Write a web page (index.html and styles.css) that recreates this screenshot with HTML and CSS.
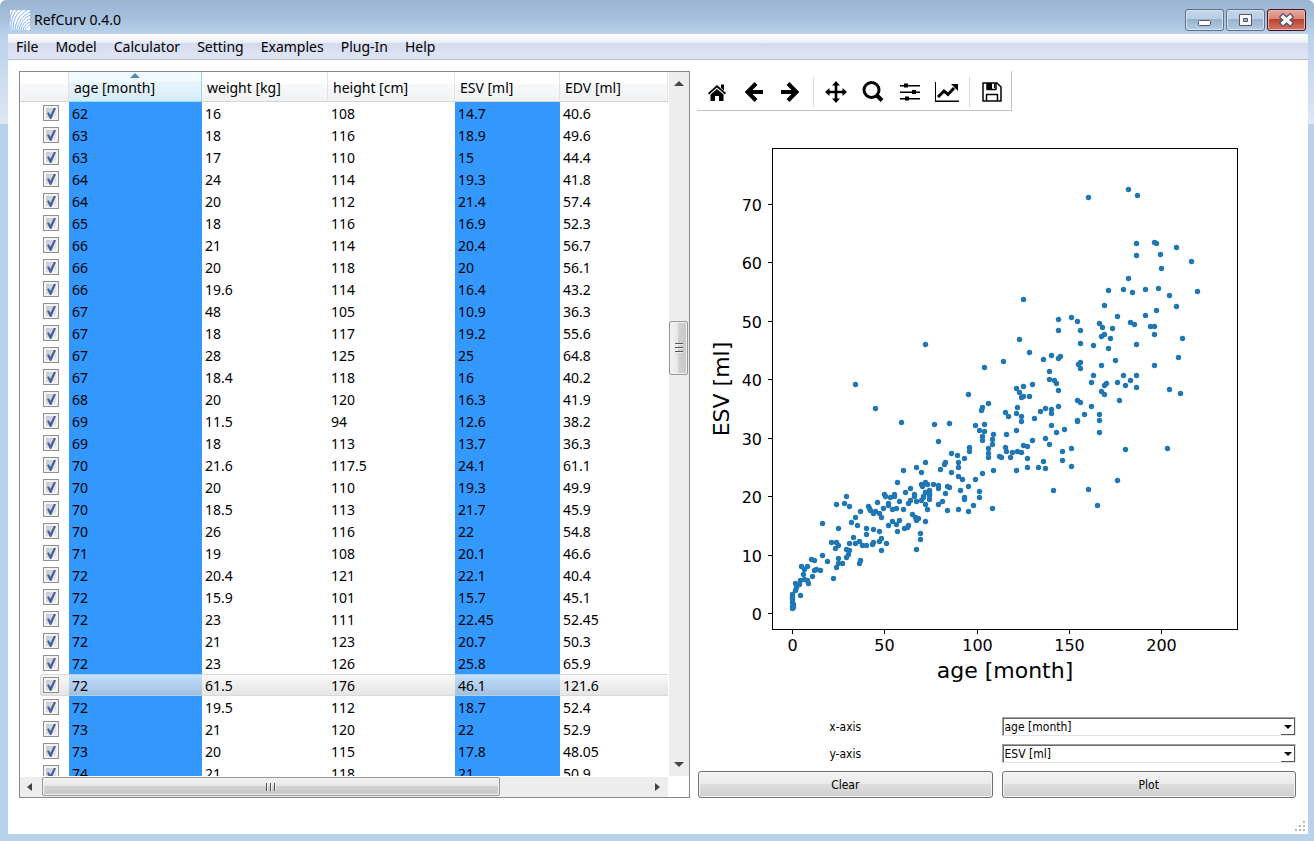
FILE: index.html
```html
<!DOCTYPE html>
<html lang="en">
<head>
<meta charset="utf-8">
<title>RefCurv 0.4.0</title>
<link rel="stylesheet" href="styles.css">
</head>
<body>
<div class="window">
  <header class="titlebar">
    <svg class="logo" viewBox="0 0 20 20" aria-hidden="true">
      <rect width="20" height="20" fill="#fff"/>
      <g fill="none" stroke="#7fb2f5" stroke-width="1">
        <path d="M1 20C1 12 2 6 7 0M3 20C3 12 5 5 12 0M5 20C6 12 9 5 17 0M7 20C8 13 12 6 20 2M9 20C10 14 14 8 20 5M11 20C12 15 15 11 20 9M13 20C14 16 16 14 20 12M15 20C16 18 18 16 20 15M0 12C0 6 1 4 3 0"/>
      </g>
    </svg>
    <span class="title">RefCurv 0.4.0</span>
    <div class="controls">
      <button class="ctl" aria-label="Minimize"><svg viewBox="0 0 36 20"><rect x="12.500" y="10.500" width="12" height="5" rx="1" fill="#fff" stroke="#535666"/></svg></button>
      <button class="ctl" aria-label="Restore"><svg viewBox="0 0 36 20"><path d="M12.500 4.500h12v11h-12zM16.500 8.500v3h4v-3z" fill="#f7f7f7" fill-rule="evenodd" stroke="#535666"/></svg></button>
      <button class="ctl close" aria-label="Close"><svg viewBox="0 0 36 20"><path d="M15 7L22 13M22 7L15 13" stroke="#535666" stroke-width="6" stroke-linecap="square"/><path d="M15 7L22 13M22 7L15 13" stroke="#f7f7f7" stroke-width="3.500" stroke-linecap="square"/></svg></button>
    </div>
  </header>
  <div class="client">
    <nav class="menubar">
      <button>File</button><button>Model</button><button>Calculator</button><button>Setting</button><button>Examples</button><button>Plug-In</button><button>Help</button>
    </nav>
    <main class="content">
      <section class="table-pane">
        <div class="viewport">
          <table>
            <colgroup><col class="c-check"><col class="c-age"><col class="c-weight"><col class="c-height"><col class="c-esv"><col></colgroup>
            <thead><tr><th></th><th class="sorted">age [month]</th><th>weight [kg]</th><th>height [cm]</th><th>ESV [ml]</th><th>EDV [ml]</th></tr></thead>
            <tbody id="rows"></tbody>
          </table>
        </div>
        <div class="scroll vertical">
          <svg class="arrow" viewBox="0 0 10 10"><path d="M0 8L5 3L10 8z"/></svg>
          <div class="track"><div class="thumb"><i></i><i></i><i></i></div></div>
          <svg class="arrow" viewBox="0 0 10 10"><path d="M0 2L5 7L10 2z"/></svg>
        </div>
        <div class="scroll horizontal">
          <svg class="arrow" viewBox="0 0 10 10"><path d="M8 1L3 5L8 9z"/></svg>
          <div class="track"><div class="thumb"><i></i><i></i><i></i></div></div>
          <svg class="arrow" viewBox="0 0 10 10"><path d="M3 1L8 5L3 9z"/></svg>
        </div>
      </section>
      <section class="plot-pane">
        <div class="toolbar">
          <button aria-label="Home"><svg viewBox="0 0 24 24"><path d="M12 5L21 13L20 14.500L12 7.500L4 14.500L3 13zM16 4.500h3v6l-3-2.700zM12 9L18.500 14.500V21H14v-5h-4v5H5.500v-6.500z"/></svg></button>
          <button aria-label="Back"><svg viewBox="0 0 24 24"><path class="line" d="M21 12H6M14 3.500L5.500 12L14 20.500"/></svg></button>
          <button aria-label="Forward"><svg viewBox="0 0 24 24"><path class="line" d="M2 12H17M9 3.500L17.500 12L9 20.500"/></svg></button>
          <span class="sep"></span>
          <button aria-label="Pan"><svg viewBox="0 0 24 24"><path d="M12 1L16 5.500H13.300V10.700H18.500V8L23 12L18.500 16V13.300H13.300V18.500H16L12 23L8 18.500H10.700V13.300H5.500V16L1 12L5.500 8V10.700H10.700V5.500H8z"/></svg></button>
          <button aria-label="Zoom"><svg viewBox="0 0 24 24"><circle cx="10.500" cy="10" r="7.500" fill="none" stroke="#000" stroke-width="3"/><path class="line" d="M16 15.500L21 20.500"/></svg></button>
          <button aria-label="Configure subplots"><svg viewBox="0 0 24 24"><path d="M2 5h20v1.500H2zM2 11.500h20V13H2zM2 18h20v1.500H2zM6 3.500h4v4H6zM14 10h4v4h-4zM7 16.500h4v4H7z"/></svg></button>
          <button aria-label="Edit axis"><svg class="wide" viewBox="0 0 26 24"><path d="M1 2h1v18.500h23V22H1z"/><path d="M4 17L10 11L14 14.500L20 8" fill="none" stroke="#000" stroke-width="3"/><path d="M17 4h7v7z"/></svg></button>
          <span class="sep"></span>
          <button aria-label="Save"><svg viewBox="0 0 24 24"><path d="M3 3h14l4 4v14H3zM6.500 21v-6.500h11V21M7 3v6.500h9V3" fill="none" stroke="#000" stroke-width="1.500" stroke-linejoin="round"/><path d="M7 3h5v6H7zM14 4h1v4h-1z"/></svg></button>
        </div>
        <svg class="chart" id="chart" viewBox="697 111 599 596" preserveAspectRatio="xMidYMin meet" role="img" aria-label="Scatter plot of ESV against age">
          <g id="points" fill="#1f77b4"></g>
          <rect x="772.500" y="148.500" width="465" height="481" fill="none" stroke="#000"/>
          <g id="ticks" stroke="#000"></g>
          <g id="labels" class="ticktext"></g>
          <text class="axis" x="1005" y="678" text-anchor="middle">age [month]</text>
          <text class="axis" transform="translate(729 389) rotate(-90)" text-anchor="middle">ESV [ml]</text>
        </svg>
        <form class="form">
          <label for="xaxis">x-axis</label>
          <div class="combo"><select id="xaxis"><option>age [month]</option><option>weight [kg]</option><option>height [cm]</option><option>ESV [ml]</option><option>EDV [ml]</option></select><span></span></div>
          <label for="yaxis">y-axis</label>
          <div class="combo"><select id="yaxis"><option>ESV [ml]</option><option>EDV [ml]</option><option>age [month]</option><option>weight [kg]</option><option>height [cm]</option></select><span></span></div>
          <button type="button" class="push">Clear</button>
          <button type="button" class="push">Plot</button>
        </form>
      </section>
    </main>
    <svg class="grip" viewBox="0 0 12 12" aria-hidden="true"><path d="M8 0h2v2h-2zM4 4h2v2h-2zM8 4h2v2h-2zM0 8h2v2h-2zM4 8h2v2h-2zM8 8h2v2h-2z"/></svg>
  </div>
</div>
<script src="app.js"></script>
</body>
</html>
```
FILE: styles.css
```css
* { box-sizing: border-box; }

body {
  margin: 0;
  font: 14px/20px "Noto Sans", "Open Sans", sans-serif;
  color: #000;
}

button, select { font: inherit; color: inherit; }

.window {
  height: 100vh;
  min-height: 640px;
  display: flex;
  flex-direction: column;
  padding: 0 6px 7px 8px;
  border-radius: 6px 6px 0 0;
  background:
    linear-gradient(#99b4d1, #a6c0dc 18px, #b9d1ea 34px) top / 100% 34px no-repeat,
    linear-gradient(#b9d1ea, #dce8f5) 0 34px / 100% 90px no-repeat,
    #b9d1ea;
}

.titlebar {
  height: 34px;
  flex: none;
  display: flex;
  align-items: flex-start;
  padding: 9px 2px 0;
}

.logo { width: 20px; height: 20px; margin-top: 1px; }
.title { margin: 1px auto 0 4px; }

.controls { display: flex; gap: 2px; }

.ctl {
  width: 39px;
  height: 22px;
  padding: 0;
  border: 1px solid #5f7088;
  border-radius: 3px;
  background: linear-gradient(#c3d6e9, #b9cfe5 45%, #98b1cc 46%, #b4cce4);
  box-shadow: inset 0 0 0 1px #d6e4f2;
}

.ctl svg { display: block; width: 36px; height: 20px; }

.ctl.close {
  border-color: #431422;
  background: linear-gradient(#e8a89c, #d9877a 45%, #b8412b 46%, #d4786a);
  box-shadow: inset 0 0 0 1px #e9b5ac;
}

.client {
  flex: 1;
  min-height: 0;
  display: flex;
  flex-direction: column;
  position: relative;
  background: #fff;
}

.menubar {
  height: 26px;
  flex: none;
  display: flex;
  gap: 17px;
  padding: 0 8px;
  border-bottom: 1px solid #b6bccc;
  background: linear-gradient(#fff, #e8edf6 9px, #d4daed 9px, #e1e6f6);
}

.menubar button { padding: 0; border: 0; background: none; }

.content {
  flex: 1;
  min-height: 0;
  display: grid;
  grid-template-columns: minmax(0, 671fr) minmax(0, 599fr);
  gap: 7px;
  padding: 11px 12px 36px 11px;
}

.table-pane {
  min-height: 0;
  display: grid;
  grid-template: minmax(0, 1fr) 20px / minmax(0, 1fr) 20px;
  gap: 1px;
  border: 1px solid #828790;
}

.viewport { overflow: hidden; }

table {
  width: 100%;
  table-layout: fixed;
  border-collapse: separate;
  border-spacing: 0;
}

.c-check { width: 49px; }
.c-age { width: 133px; }
.c-weight { width: 126px; }
.c-height { width: 127px; }
.c-esv { width: 105px; }

th {
  height: 30px;
  padding: 2px 0 0 5px;
  text-align: left;
  font-weight: 400;
  white-space: nowrap;
  border-right: 1px solid #e2e3e6;
  border-bottom: 1px solid #d5d5d5;
  background: linear-gradient(#fff 12px, #f7f8fa 12px, #f1f2f4);
}

th.sorted {
  position: relative;
  border-right-color: #96d9f0;
  border-bottom-color: #96d9f0;
  background: linear-gradient(#f2fafd 10px, #e4f4fb 10px, #d8ecf6);
}

th.sorted::after {
  content: "";
  position: absolute;
  top: 1px;
  left: calc(50% - 5px);
  border: 5px solid transparent;
  border-top: 0;
  border-bottom-color: #4d8cab;
}

td { height: 22px; padding: 2px 0 0 3px; line-height: 20px; }

td.marked { background: #39f; }

td.check { padding: 0 0 0 20px; }

td.check label {
  display: flex;
  align-items: center;
  height: 22px;
  padding-left: 3px;
}

.check input {
  appearance: none;
  position: relative;
  width: 16px;
  height: 16px;
  margin: 0;
  border: 1px solid #8e8f8f;
  background: linear-gradient(135deg, #b9bec9, #f4f5f7);
  box-shadow: inset 0 0 0 2px #f4f4f4;
}

.check input:checked::after {
  content: "";
  position: absolute;
  inset: 2px 2px 1px 3px;
  background: #4a5f97;
  clip-path: polygon(0 45%, 20% 38%, 38% 62%, 76% 0, 100% 0, 48% 100%, 32% 100%);
}

tr.current td { padding-top: 1px; border: solid #d9d9d9; border-width: 1px 0; background: linear-gradient(#f8f8f8, #e5e5e5); }
tr.current td.marked { border-color: #b5cfe7; background: linear-gradient(#c2dffb, #a0c0e0); }
tr.current td.check { padding-top: 0; border: 0; background: none; }
tr.current label { border: 1px solid #d9d9d9; border-right: 0; border-radius: 3px 0 0 3px; background: linear-gradient(#f8f8f8, #e5e5e5); padding-left: 2px; }

tr.current td:not(.check) { line-height: 19px; }

.scroll { display: flex; align-items: center; background: #ededed; }
.vertical { flex-direction: column; padding: 6px 0; }
.horizontal { padding: 0 6px 0 4px; }
.arrow { width: 10px; height: 10px; flex: none; fill: #444; }
.track { flex: 1; align-self: stretch; display: flex; }
.vertical .track { flex-direction: column; padding: 233px 1px 0 0; }
.horizontal .track { padding: 0 0 1px 8px; }

.thumb {
  display: flex;
  align-items: center;
  justify-content: center;
  gap: 2px;
  border: 1px solid #979797;
  border-radius: 2px;
  background: linear-gradient(#f4f4f4, #e6e6e6 48%, #d2d2d4 49%, #c6c6c8);
  box-shadow: inset 0 0 0 1px #f2f2f2;
}

.horizontal .thumb { width: 75%; }
.vertical .thumb { height: 54px; flex-direction: column; background: linear-gradient(90deg, #f4f4f4, #e6e6e6 48%, #d2d2d4 49%, #c6c6c8); }
.thumb i { width: 2px; height: 8px; border-left: 1px solid #555; border-right: 1px solid #eee; }
.vertical .thumb i { width: 8px; height: 2px; border: 0; border-top: 1px solid #555; border-bottom: 1px solid #eee; }

.plot-pane { min-height: 0; display: flex; flex-direction: column; }

.toolbar {
  flex: none;
  align-self: flex-start;
  display: flex;
  align-items: center;
  height: 40px;
  padding: 2px 1px 0 1px;
  border: solid #c3c3c3;
  border-width: 0 1px 1px 0;
}

.toolbar button {
  display: flex;
  align-items: center;
  justify-content: center;
  width: 37px;
  height: 36px;
  padding: 0;
  border: 0;
  background: none;
}

.toolbar svg { width: 24px; height: 24px; }
.toolbar svg.wide { width: 26px; }
.line { fill: none; stroke: #000; stroke-width: 4; }
.sep { width: 1px; height: 30px; margin: 0 3px 0 4px; background: #dcdcdc; }

.chart { flex: 1; min-height: 0; width: 100%; }
.ticktext { font: 16px "DejaVu Sans", sans-serif; }
.axis { font: 22px "DejaVu Sans", sans-serif; }

.form {
  flex: none;
  display: grid;
  grid-template-columns: 1fr 1fr;
  gap: 8px 9px;
  padding-left: 1px;
  font: 12px/16px "DejaVu Sans Condensed", "DejaVu Sans", sans-serif;
  align-items: center;
  text-align: center;
}

.combo { position: relative; height: 19px; }

.combo select {
  appearance: none;
  display: block;
  width: 100%;
  height: 19px;
  padding: 0 20px 0 2px;
  border: 1px solid #e3e3e3;
  border-top-color: #a0a0a0;
  border-left-color: #a0a0a0;
  border-radius: 0;
  background: #fff;
  box-shadow: inset 1px 1px 0 #696969;
}

.combo span {
  position: absolute;
  top: 2px;
  right: 1px;
  width: 14px;
  height: 16px;
  border: solid #555;
  border-width: 0 1px 1px 0;
  background: #fff;
  pointer-events: none;
}

.combo span::after {
  content: "";
  position: absolute;
  left: 3px;
  top: 6px;
  border: 4px solid transparent;
  border-top-color: #000;
  border-bottom: 0;
}

.push {
  height: 27px;
  padding: 0;
  border: 1px solid #707070;
  border-radius: 3px;
  background: linear-gradient(#f2f2f2, #ebebeb 48%, #dddddd 49%, #cfcfcf);
  box-shadow: inset 0 0 0 1px #f6f6f6;
}

.grip { position: absolute; right: 1px; bottom: 1px; width: 12px; height: 12px; fill: #b5b5b5; }
```
FILE: app.js
```js
const rows = `62 16 108 14.7 40.6
63 18 116 18.9 49.6
63 17 110 15 44.4
64 24 114 19.3 41.8
64 20 112 21.4 57.4
65 18 116 16.9 52.3
66 21 114 20.4 56.7
66 20 118 20 56.1
66 19.6 114 16.4 43.2
67 48 105 10.9 36.3
67 18 117 19.2 55.6
67 28 125 25 64.8
67 18.4 118 16 40.2
68 20 120 16.3 41.9
69 11.5 94 12.6 38.2
69 18 113 13.7 36.3
70 21.6 117.5 24.1 61.1
70 20 110 19.3 49.9
70 18.5 113 21.7 45.9
70 26 116 22 54.8
71 19 108 20.1 46.6
72 20.4 121 22.1 40.4
72 15.9 101 15.7 45.1
72 23 111 22.45 52.45
72 21 123 20.7 50.3
72 23 126 25.8 65.9
72 61.5 176 46.1 121.6
72 19.5 112 18.7 52.4
73 21 120 22 52.9
73 20 115 17.8 48.05
74 21 118 21 50.9`.split("\n").map(r => r.split(" "));

const current = 26;
const marked = [0, 3];
document.getElementById("rows").innerHTML = rows.map((r, i) =>
  `<tr${i === current ? ' class="current"' : ""}><td class="check"><label><input type="checkbox" checked aria-label="Use row ${i + 1}"></label></td>` +
  r.map((v, c) => `<td${marked.includes(c) ? ' class="marked"' : ""}>${v}</td>`).join("") + "</tr>").join("");

// Scatter positions in chart units
const points = `846,496 836,504 844,503 849,506 860,511 822,523 838,528 851,522 855,517 857,525 868,506 869,508 870,510 873,513 875,511 879,513 881,517 877,502 884,494 885,496 890,497 894,494 894,496 888,503 888,505 883,508 892,509 896,508 899,501 903,509 905,492 910,488 897,482 903,470 916,467 921,472 925,462 908,503 910,500 914,494 914,496 916,501 921,500 923,497 925,504 927,509 921,484 922,486 925,482 927,484 925,492 929,491 929,495 929,499
912,514 915,517 916,520 918,518 925,521 908,525 907,527 904,528 899,520 896,524 892,521 888,525 897,531 920,533 920,539 916,549 866,528 873,529 879,531 866,534 853,537 849,543 855,543 859,541 862,545 866,545 872,544 873,542 879,541 881,538 886,543 881,550 831,542 836,542 838,545 835,548 846,549 849,550 848,554 846,557 838,558 827,561 838,563 842,563 836,567 860,560 859,563 833,578 822,555 811,559 814,560 801,566 807,566 804,569 814,570 816,569 820,570 803,574 812,576 800,580 804,579 807,580 808,583 799,584 795,583 796,587 795,590 800,595 792,594 792,597 792,599 792,602 793,604 792,606 793,607 792,608
1019,339 1029,352 1043,359 1051,355 1058,358 1060,356 1003,361 984,367 925,344 968,394 1049,371 1049,379 1054,380 1056,383 1058,390 1032,384 1023,386 1016,388 1019,392 1021,397 1023,396 1029,396 988,403 982,407 981,410 1017,407 1016,413 1021,416 1021,421 1005,412 1008,416 1034,418 1040,411 1045,408 1051,409 1051,413 1058,406 1077,400 1080,402 1077,420 1077,421 934,424 949,423 975,425 984,424 979,430 984,431 982,436 982,440 993,434 992,439 992,444 988,448 988,453 988,457 1006,434 1016,430 1051,425 1056,432 1064,429 1045,438 1049,444 1062,451 1071,448 1062,460 1071,466 1032,440 1023,445 1027,446 1005,447 1006,451 1012,452 1017,451 1021,452 1010,457 999,456 1001,457 1027,458 1027,467 1038,467 1045,468 1043,461 1016,470 1053,490 993,470 982,473 975,479 968,486 979,491 979,497 992,508 973,505 968,511 964,497 964,499 960,490 962,479 958,476 958,467 958,462 964,458 969,447 969,451 938,441 951,453 957,455 945,462 944,464 940,469 951,472 947,486 949,487 945,493 942,501 938,504 947,510 958,509 933,484 938,485 938,488 929,490 925,492 929,494 923,496
1080,343 1093,345 1101,336 1104,334 1110,338 1112,328 1108,348 1136,344 1154,334 1182,338 1178,357 1154,365 1078,364 1080,362 1080,368 1101,365 1115,360 1093,375 1091,382 1106,383 1104,385 1101,391 1104,394 1117,382 1125,385 1130,380 1123,375 1136,375 1136,387 1119,400 1169,389 1180,393 1091,406 1084,414 1099,414 1099,420 1099,432 1125,449 1167,448 1117,480 1088,489 1097,505
1088,197 1128,189 1137,195 1136,243 1136,255 1154,242 1156,243 1176,247 1160,254 1191,261 1161,268 1128,278 1108,290 1123,289 1132,292 1145,289 1158,288 1169,295 1197,291 1104,305 1176,306 1156,310 1145,315 1117,316 1130,322 1134,324 1099,323 1102,327 1150,326 1154,326 1023,299 1058,319 1058,330 1071,317 1077,321 1080,330 855,384 875,408 901,422`.split(/\s+/);

document.getElementById("points").innerHTML = points.map(p => {
  const [x, y] = p.split(",");
  return `<circle cx="${+x + 0.5}" cy="${+y + 0.5}" r="2.700"/>`;
}).join("");

let ticks = "", labels = "";
for (let v = 0; v <= 200; v += 50) {
  const x = Math.round(792 + v * 1.847) + 0.5;
  ticks += `<path d="M${x} 630v4"/>`;
  labels += `<text x="${x}" y="651" text-anchor="middle">${v}</text>`;
}
for (let v = 0; v <= 70; v += 10) {
  const y = Math.round(613 - v * 5.85) + 0.5;
  ticks += `<path d="M768 ${y}h4"/>`;
  labels += `<text x="762" y="${y + 6}" text-anchor="end">${v}</text>`;
}
document.getElementById("ticks").innerHTML = ticks;
document.getElementById("labels").innerHTML = labels;
```
